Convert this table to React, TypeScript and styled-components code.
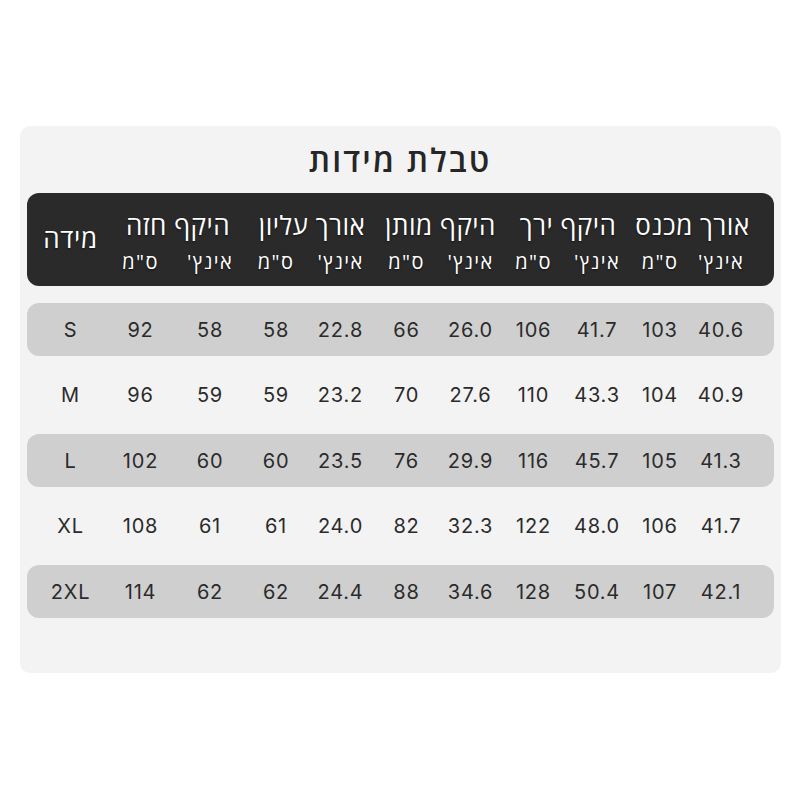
import React from "react";
import styled, { createGlobalStyle } from "styled-components";

const GlobalStyle = createGlobalStyle`
  html, body { margin: 0; padding: 0; background: #ffffff; }
  * { box-sizing: border-box; }
`;

const COLS = "59px 63px 63px 64px 62px 66px 66px 63px 69px 70px 70px";

const Page = styled.div`
  width: 800px;
  height: 800px;
  display: flex;
  justify-content: center;
  align-items: flex-start;
  padding-top: 126px;
  background: #ffffff;
`;

const Card = styled.div`
  width: 761px;
  height: 547px;
  background: #f3f3f3;
  border-radius: 10px;
  padding: 0 7px;
  direction: rtl;
  font-family: "Open Sans", "DejaVu Sans", sans-serif;
`;

const Title = styled.h1`
  margin: 0;
  height: 67px;
  line-height: 67px;
  text-align: center;
  font-size: 32px;
  font-weight: 600;
  letter-spacing: 2.2px;
  color: #262626;
`;

const Header = styled.div`
  display: grid;
  grid-template-columns: ${COLS};
  grid-template-rows: auto auto;
  align-content: start;
  height: 93px;
  padding: 15px 23px 0 9px;
  background: #2a2a2a;
  border-radius: 12px;
  color: #ffffff;
  text-shadow: 0 1px 2px rgba(0, 0, 0, 0.6);
`;

const GroupLabel = styled.div`
  grid-column: span 2;
  grid-row: 1;
  text-align: center;
  padding-left: 6px;
  font-size: 26px;
  font-weight: 500;
  letter-spacing: 0.5px;
  line-height: 34px;
  white-space: nowrap;
`;

const SizeLabel = styled.div`
  grid-column: 11;
  grid-row: 1 / span 2;
  align-self: start;
  margin-top: 13px;
  text-align: center;
  font-size: 26px;
  font-weight: 500;
  letter-spacing: 0.7px;
  line-height: 34px;
`;

const UnitLabel = styled.div`
  grid-row: 2;
  margin-top: 5px;
  text-align: center;
  font-size: 20px;
  font-weight: 500;
  letter-spacing: 1.4px;
  line-height: 30px;
  white-space: nowrap;
`;

const Rows = styled.div`
  display: flex;
  flex-direction: column;
  gap: 12.5px;
  margin-top: 17px;
`;

const Row = styled.div<{ $shaded: boolean }>`
  display: grid;
  grid-template-columns: ${COLS};
  align-items: center;
  height: 53px;
  padding: 0 23px 0 9px;
  border-radius: 12px;
  background: ${(p) => (p.$shaded ? "#cfcfcf" : "transparent")};
`;

const Value = styled.div`
  text-align: center;
  font-family: Inter, "Open Sans", sans-serif;
  font-size: 20px;
  letter-spacing: 0.8px;
  color: #2b2b2b;
  direction: ltr;
`;

const groups = ["אורך מכנס", "היקף ירך", "היקף מותן", "אורך עליון", "היקף חזה"];

const data: string[][] = [
  ["40.6", "103", "41.7", "106", "26.0", "66", "22.8", "58", "58", "92", "S"],
  ["40.9", "104", "43.3", "110", "27.6", "70", "23.2", "59", "59", "96", "M"],
  ["41.3", "105", "45.7", "116", "29.9", "76", "23.5", "60", "60", "102", "L"],
  ["41.7", "106", "48.0", "122", "32.3", "82", "24.0", "61", "61", "108", "XL"],
  ["42.1", "107", "50.4", "128", "34.6", "88", "24.4", "62", "62", "114", "2XL"],
];

export default function App() {
  return (
    <>
      <GlobalStyle />
      <Page>
        <Card>
          <Title>טבלת מידות</Title>
          <Header>
            {groups.map((g) => (
              <GroupLabel key={g}>{g}</GroupLabel>
            ))}
            <SizeLabel>מידה</SizeLabel>
            {groups.map((g) => (
              <React.Fragment key={g}>
                <UnitLabel>אינץ'</UnitLabel>
                <UnitLabel>ס"מ</UnitLabel>
              </React.Fragment>
            ))}
          </Header>
          <Rows>
            {data.map((r, i) => (
              <Row key={r[10]} $shaded={i % 2 === 0}>
                {r.map((v, j) => (
                  <Value key={j}>{v}</Value>
                ))}
              </Row>
            ))}
          </Rows>
        </Card>
      </Page>
    </>
  );
}
